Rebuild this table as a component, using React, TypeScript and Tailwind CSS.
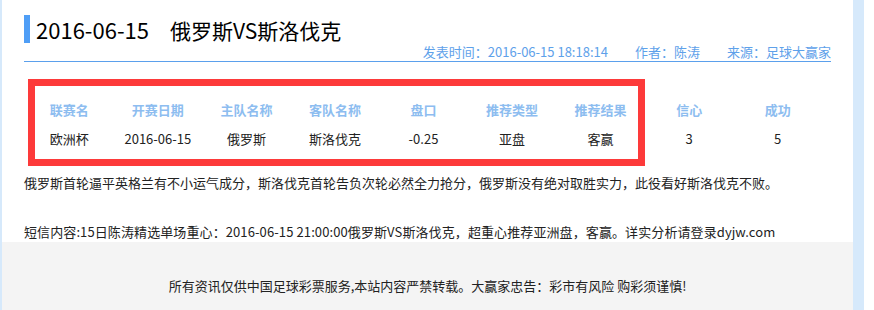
const headers = ["联赛名", "开赛日期", "主队名称", "客队名称", "盘口", "推荐类型", "推荐结果", "信心", "成功"];
const values = ["欧洲杯", "2016-06-15", "俄罗斯", "斯洛伐克", "-0.25", "亚盘", "客赢", "3", "5"];

export default function App() {
  return (
    <div
      className="flex w-[874px] h-[310px] bg-white overflow-hidden"
      style={{ fontFamily: '"Noto Sans CJK SC", "Liberation Sans", sans-serif' }}
    >
      <div className="w-[2px] bg-[#d6e9fb]" />
      <div className="relative w-[851px] flex flex-col bg-white">
        {/* article header */}
        <div className="ml-[22px] w-[807px] pt-[15px] border-b border-[#5ba0ec]">
          <div className="flex items-center h-[28px]">
            <div className="w-[6px] h-[28px] bg-[#4f9ef6]" />
            <h1 className="ml-[6px] flex items-baseline leading-[28px] text-black">
              <span className="text-[22px]">2016-06-15</span>
              <span className="ml-[21px] text-[21px]">俄罗斯VS斯洛伐克</span>
            </h1>
          </div>
          <div className="h-[18px] flex justify-end text-[13px] leading-[18px] text-[#5ea1ea]">
            <span>发表时间：2016-06-15 18:18:14</span>
            <span className="ml-[27px]">作者：陈涛</span>
            <span className="ml-[27px]">来源：足球大赢家</span>
          </div>
        </div>

        {/* match table */}
        <div className="ml-[23px] mt-[33px] w-[797px] text-[13px]">
          <div className="grid grid-cols-9 h-[29px] items-center text-center font-bold text-[#8dbdf0]">
            {headers.map((h) => (
              <div key={h}>{h}</div>
            ))}
          </div>
          <div className="grid grid-cols-9 h-[29px] items-center text-center text-[#222]">
            {values.map((v, i) => (
              <div key={i}>{v}</div>
            ))}
          </div>
        </div>

        <p className="ml-[22px] mt-[20px] text-[13px] leading-[20px] text-[#222]">
          俄罗斯首轮逼平英格兰有不小运气成分，斯洛伐克首轮告负次轮必然全力抢分，俄罗斯没有绝对取胜实力，此役看好斯洛伐克不败。
        </p>
        <p className="ml-[22px] mt-[29px] text-[13px] leading-[20px] text-[#222] tracking-[0.1px]">
          短信内容:15日陈涛精选单场重心：2016-06-15 21:00:00俄罗斯VS斯洛伐克，超重心推荐亚洲盘，客赢。详实分析请登录dyjw.com
        </p>

        <footer className="flex-1 bg-[#f4f4f4] pt-[34px] text-center text-[13px] leading-[20px] text-[#222]">
          所有资讯仅供中国足球彩票服务,本站内容严禁转载。大赢家忠告：彩市有风险 购彩须谨慎!
        </footer>

        {/* annotation box */}
        <div className="absolute left-[26px] top-[79px] w-[617px] h-[87px] border-[7px] border-[#fd3a3a]" />
      </div>
      <div className="w-[11px] bg-[#d6e9fb]" />
    </div>
  );
}
